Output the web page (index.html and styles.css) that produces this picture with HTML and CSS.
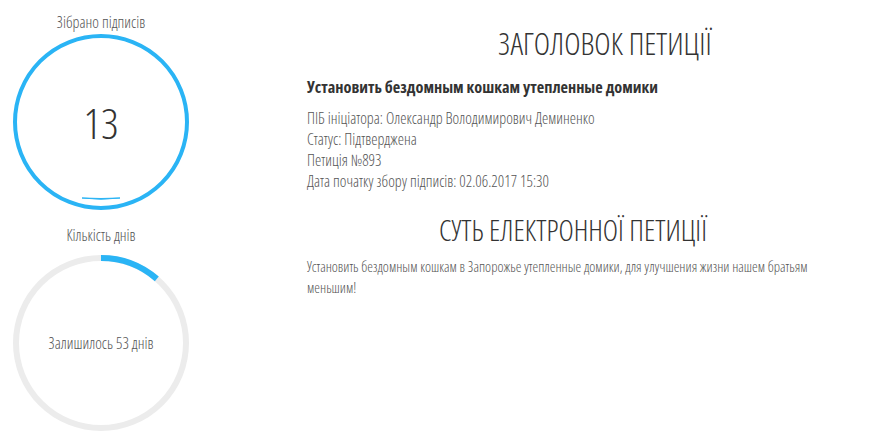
FILE: index.html
```html
<!DOCTYPE html>
<html lang="uk">
<head>
<meta charset="utf-8">
<title>Петиція</title>
<link rel="stylesheet" href="styles.css">
</head>
<body>
<div class="page">
  <aside class="sidebar">
    <div class="gauge-label">Зібрано підписів</div>
    <div class="gauge">
      <svg class="ring" width="180" height="180" viewBox="0 0 180 180">
        <circle cx="90" cy="90" r="86" fill="none" stroke="#2ab4f5" stroke-width="4"/>
        <path d="M71 166 Q90 168.5 109 166 Q90 167 71 166 Z" fill="#2ab4f5" stroke="#2ab4f5" stroke-width="1" stroke-linejoin="round"/>
      </svg>
      <div class="gauge-value big">13</div>
    </div>
    <div class="gauge-label second">Кількість днів</div>
    <div class="gauge lower">
      <svg class="ring" width="180" height="180" viewBox="0 0 180 180">
        <circle cx="90" cy="90" r="85" fill="none" stroke="#ececec" stroke-width="6"/>
        <circle cx="90" cy="90" r="85" fill="none" stroke="#2ab4f5" stroke-width="6" stroke-dasharray="60.8 600" transform="rotate(-90 90 90)"/>
      </svg>
      <div class="gauge-value small">Залишилось 53 днів</div>
    </div>
  </aside>
  <main class="content">
    <h1 class="title first">ЗАГОЛОВОК ПЕТИЦІЇ</h1>
    <h2 class="subject">Установить бездомным кошкам утепленные домики</h2>
    <ul class="meta">
      <li>ПІБ ініціатора: Олександр Володимирович Деминенко</li>
      <li>Статус: Підтверджена</li>
      <li>Петиція №893</li>
      <li>Дата початку збору підписів: 02.06.2017 15:30</li>
    </ul>
    <h1 class="title second">СУТЬ ЕЛЕКТРОННОЇ ПЕТИЦІЇ</h1>
    <p class="body">Установить бездомным кошкам в Запорожье утепленные домики, для улучшения жизни нашем братьям меньшим!</p>
  </main>
</div>
</body>
</html>
```
FILE: styles.css
```css
html, body {
  margin: 0;
  padding: 0;
  background: #ffffff;
}
body {
  font-family: "Open Sans", "Liberation Sans", sans-serif;
  color: #444444;
}
.page {
  display: flex;
  align-items: flex-start;
}
.sidebar {
  width: 202px;
  display: flex;
  flex-direction: column;
  align-items: center;
  padding-top: 12px;
}
.gauge-label {
  font-weight: 300;
  font-stretch: 75%;
  font-size: 15.8px;
  line-height: 20px;
  color: #555555;
}
.gauge-label.second {
  margin-top: 13px;
}
.gauge {
  display: grid;
  place-items: center;
}
.gauge.lower {
  margin-top: 8px;
}
.gauge .ring,
.gauge .gauge-value {
  grid-area: 1 / 1;
}
.gauge .ring {
  display: block;
}
.gauge-value.big {
  font-weight: 300;
  font-stretch: 75%;
  font-size: 43px;
  color: #333333;
  line-height: 1;
}
.gauge-value.small {
  font-weight: 300;
  font-stretch: 75%;
  font-size: 15.8px;
  color: #555555;
}
.content {
  margin-left: 105px;
  width: 532px;
}
.title {
  margin: 0;
  font-weight: 300;
  font-stretch: 75%;
  font-size: 29px;
  line-height: 36px;
  color: #333333;
  text-align: center;
}
.title.first {
  margin-top: 25px;
  padding-left: 64px;
  font-size: 31px;
}
.title.second {
  margin-top: 20px;
}
.subject {
  margin: 16px 0 0;
  font-size: 16.3px;
  font-weight: 700;
  font-stretch: 75%;
  line-height: 20px;
  color: #333333;
}
.meta {
  list-style: none;
  margin: 11px 0 0;
  padding: 0;
}
.meta li {
  font-weight: 300;
  font-stretch: 75%;
  font-size: 15.8px;
  line-height: 21px;
  color: #555555;
}
.body {
  margin: 8px 0 0;
  font-weight: 300;
  font-stretch: 75%;
  font-size: 14.4px;
  line-height: 21px;
  color: #555555;
}
```
